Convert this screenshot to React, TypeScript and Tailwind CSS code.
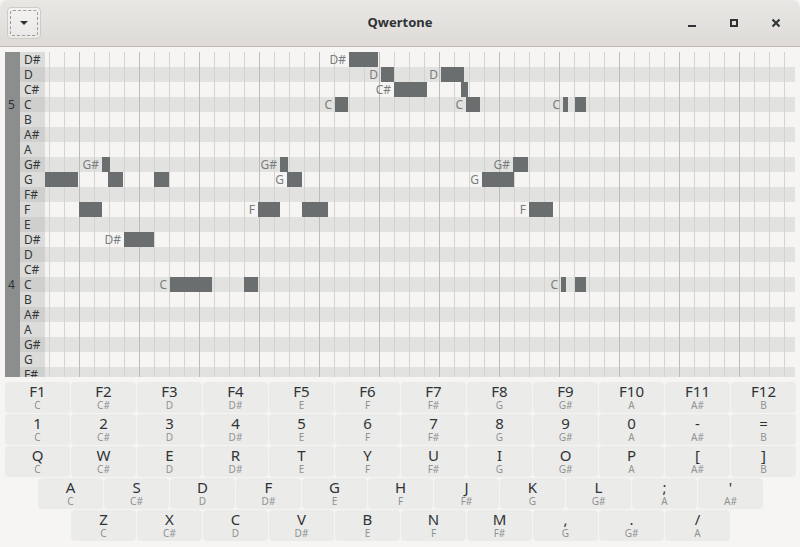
import React from "react";

const ROWS = ["D#", "D", "C#", "C", "B", "A#", "A", "G#", "G", "F#", "F", "E", "D#", "D", "C#", "C", "B", "A#", "A", "G#", "G", "F#"];
const OCTAVES: Record<number, string> = { 3: "5", 15: "4" };

// row index, start x, end x (page coords), label
const NOTES: [number, number, number, string | null][] = [
  [0, 349, 378, "D#"],
  [1, 381, 394, "D"],
  [1, 441, 464, "D"],
  [2, 394, 427, "C#"],
  [2, 461, 468, null],
  [3, 335, 348, "C"],
  [3, 466, 480, "C"],
  [3, 563, 568, "C"],
  [3, 575, 586, null],
  [7, 102, 110, "G#"],
  [7, 280, 288, "G#"],
  [7, 513, 528, "G#"],
  [8, 45, 78, null],
  [8, 108, 123, null],
  [8, 154, 169, null],
  [8, 287, 302, "G"],
  [8, 482, 514, "G"],
  [10, 79, 102, null],
  [10, 258, 280, "F"],
  [10, 302, 328, null],
  [10, 529, 553, "F"],
  [12, 124, 154, "D#"],
  [15, 170, 212, "C"],
  [15, 244, 258, null],
  [15, 561, 566, "C"],
  [15, 575, 586, null],
];

const LINES = Array.from({ length: 50 }, (_, k) => k);

const NOTE_NAMES = ["C", "C#", "D", "D#", "E", "F", "F#", "G", "G#", "A", "A#", "B"];
const KEY_ROWS: { keys: string[]; pad: string }[] = [
  { keys: ["F1", "F2", "F3", "F4", "F5", "F6", "F7", "F8", "F9", "F10", "F11", "F12"], pad: "pl-0" },
  { keys: ["1", "2", "3", "4", "5", "6", "7", "8", "9", "0", "-", "="], pad: "pl-0" },
  { keys: ["Q", "W", "E", "R", "T", "Y", "U", "I", "O", "P", "[", "]"], pad: "pl-0" },
  { keys: ["A", "S", "D", "F", "G", "H", "J", "K", "L", ";", "'"], pad: "pl-[33px]" },
  { keys: ["Z", "X", "C", "V", "B", "N", "M", ",", ".", "/"], pad: "pl-[66px]" },
];

function Header() {
  return (
    <div className="h-[47px] shrink-0 grid grid-cols-[1fr_auto_1fr] items-center rounded-t-[8px] border-b border-[#bfb9b2] bg-gradient-to-b from-[#e9e7e4] to-[#dedbd7]">
      <div className="pl-[7px]">
        <div className="w-[34px] h-[32px] rounded-[4px] border border-[#cfcac4] bg-gradient-to-b from-[#f3f2f1] to-[#ebe9e7] p-[2px]">
          <div className="w-full h-full rounded-[3px] border border-dashed border-[#9a9a98] flex items-center justify-center">
            <svg width="10" height="6" viewBox="0 0 10 6">
              <path d="M1 1 L9 1 L5 5 Z" fill="#2e3436" />
            </svg>
          </div>
        </div>
      </div>
      <div className="text-[13px] font-bold text-[#2e3436]">Qwertone</div>
      <div className="flex justify-end pr-[3px]">
        <div className="w-[42px] h-[24px] flex items-center justify-center">
          <div className="w-[8px] h-[2px] bg-[#2e3436] mt-[5px]" />
        </div>
        <div className="w-[42px] h-[24px] flex items-center justify-center">
          <div className="w-[8px] h-[8px] border-2 border-[#2e3436]" />
        </div>
        <div className="w-[42px] h-[24px] flex items-center justify-center">
          <svg width="10" height="10" viewBox="0 0 10 10">
            <path d="M1.5 1.5 L8.5 8.5 M8.5 1.5 L1.5 8.5" stroke="#2e3436" strokeWidth="2" />
          </svg>
        </div>
      </div>
    </div>
  );
}

function PianoRoll() {
  return (
    <div className="h-[325px] flex overflow-hidden">
      <div className="w-[15px] shrink-0 bg-[#8b8e8c] flex flex-col">
        {ROWS.map((_, i) => (
          <div key={i} className="h-[15px] shrink-0 leading-[15px] text-[12px] text-[#2e3436] text-center pr-[2px]">
            {OCTAVES[i] ?? ""}
          </div>
        ))}
      </div>
      <div className="relative flex-1">
        <div className="flex flex-col">
          {ROWS.map((name, i) => {
            const light = i % 2 === 0;
            const isC = name === "C";
            return (
              <div
                key={i}
                className={`h-[15px] shrink-0 flex ${isC ? "shadow-[inset_0_-2px_0_#cbcbc9]" : ""}`}
              >
                <div
                  className={`w-[25px] shrink-0 pl-[4px] leading-[15px] text-[12px] text-[#333738] ${
                    light ? "bg-[#dcdcda]" : "bg-[#cfcfcd]"
                  }`}
                >
                  {name}
                </div>
                <div className={`flex-1 ${light ? "bg-[#f6f5f4]" : "bg-[#e2e2e0]"}`} />
              </div>
            );
          })}
        </div>
        <div className="absolute top-0 bottom-0 left-[25px] right-0 pointer-events-none">
          {LINES.map((k) => (
            <div
              key={k}
              className={`absolute top-0 bottom-0 w-px ${k % 4 === 2 ? "bg-[#bcbcbb]" : "bg-[#d3d3d2]"}`}
              style={{ left: 4 + 15 * k }}
            />
          ))}
        </div>
        <div className="absolute top-0 bottom-0 left-[25px] right-0">
          {NOTES.map(([row, x1, x2, label], i) => (
            <div
              key={i}
              className="absolute h-[15px] bg-[#6b6e6e]"
              style={{ top: row * 15, left: x1 - 45, width: x2 - x1 }}
            >
              {label && (
                <span className="absolute right-full mr-[3px] top-0 leading-[15px] text-[12px] text-[#7b7d7d] whitespace-nowrap">
                  {label}
                </span>
              )}
            </div>
          ))}
        </div>
      </div>
    </div>
  );
}

function Keyboard() {
  return (
    <div className="flex flex-col gap-px">
      {KEY_ROWS.map((row, r) => (
        <div key={r} className={`flex gap-px ${row.pad}`}>
          {row.keys.map((k, i) => (
            <div
              key={k}
              className="w-[65px] h-[31px] shrink-0 rounded-[4px] bg-[#ebebea] flex flex-col items-center justify-center"
            >
              <div className="text-[15px] leading-[15px] text-[#2e3436]">{k}</div>
              <div className="text-[10px] leading-[12px] text-[#8f9292]">{NOTE_NAMES[i]}</div>
            </div>
          ))}
        </div>
      ))}
    </div>
  );
}

export default function App() {
  return (
    <div className="w-[800px] h-[547px] bg-[#f6f5f4] flex flex-col overflow-hidden font-['Noto_Sans',sans-serif]">
      <Header />
      <div className="flex-1 flex flex-col px-[5px] pt-[5px] gap-[5px]">
        <PianoRoll />
        <Keyboard />
      </div>
    </div>
  );
}
